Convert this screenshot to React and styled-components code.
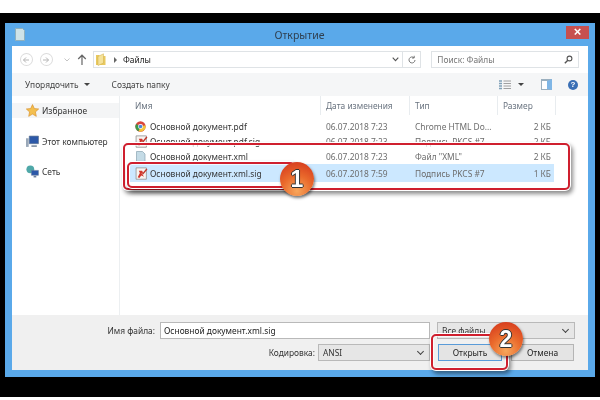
import React from "react";
import styled, { createGlobalStyle } from "styled-components";

const files = [
  { name: "Основной документ.pdf", date: "06.07.2018 7:23", type: "Chrome HTML Do...", size: "2 КБ", icon: "chrome" },
  { name: "Основной документ.pdf.sig", date: "06.07.2018 7:23", type: "Подпись PKCS #7", size: "2 КБ", icon: "sig" },
  { name: "Основной документ.xml", date: "06.07.2018 7:23", type: 'Файл "XML"', size: "2 КБ", icon: "xml" },
  { name: "Основной документ.xml.sig", date: "06.07.2018 7:59", type: "Подпись PKCS #7", size: "1 КБ", icon: "sig", selected: true },
];

function FileIcon({ kind }) {
  if (kind === "chrome") {
    return (
      <svg width="11" height="11" viewBox="0 0 12 12">
        <circle cx="6" cy="6" r="5.6" fill="#d9453a" />
        <path d="M6 6 L1.2 3.2 A5.6 5.6 0 0 0 4 11.2 Z" fill="#3a9a4a" />
        <path d="M6 6 L11.4 4.5 A5.6 5.6 0 0 1 4 11.2 Z" fill="#f2c63b" />
        <circle cx="6" cy="6" r="2.7" fill="#fff" />
        <circle cx="6" cy="6" r="2" fill="#4a86d8" />
      </svg>
    );
  }
  if (kind === "xml") {
    return (
      <svg width="11" height="12" viewBox="0 0 11 12">
        <path d="M1.5.5h6l2.5 2.5v8.5h-8.500z" fill="#c4dbe6" stroke="#8aa4b2" strokeWidth=".7" />
      </svg>
    );
  }
  return (
    <svg width="13" height="13" viewBox="0 0 12 12">
      <path d="M1 .8h9.500v10.500H1z" fill="#f6f3f0" stroke="#8c8c8c" strokeWidth=".7" />
      <path d="M2.500 9.500 L4.500 5.500 L3.500 3.500 L6.500 3.500 L7.500 5 L6 6 L8.500 9 L5.800 7.800 L4 10.200z" fill="#d2362c" />
      <path d="M6.800 6.800 L11 1.800" stroke="#c03428" strokeWidth="1.300" />
    </svg>
  );
}

function App() {
  return (
    <>
      <GlobalStyle />
      <Stage>
        <Window>
          <TitleBar>
            <svg width="10" height="13" viewBox="0 0 10 13">
              <path d="M.5.5h7l2 2v10H.5z" fill="#cfe3e8" stroke="#8fb0bd" />
            </svg>
            <Title>Открытие</Title>
            <CloseButton>×</CloseButton>
          </TitleBar>

          <Inner>
            <NavBar>
              <NavCircle>
                <svg width="8" height="8" viewBox="0 0 8 8"><path d="M7 4H1.500M4 1.500 1.500 4 4 6.500" fill="none" stroke="#b5b5b5" strokeWidth="1" /></svg>
              </NavCircle>
              <NavCircle>
                <svg width="8" height="8" viewBox="0 0 8 8"><path d="M1 4h5.500M4 1.500 6.500 4 4 6.500" fill="none" stroke="#b5b5b5" strokeWidth="1" /></svg>
              </NavCircle>
              <svg width="6" height="4" viewBox="0 0 6 4" style={{ marginLeft: 4 }}><path d="M.5.5 3 3 5.500.5" fill="none" stroke="#c4c4c4" /></svg>
              <svg width="10" height="12" viewBox="0 0 10 12" style={{ marginLeft: 7 }}><path d="M5 11V1.500M1.200 5 5 1.200 8.800 5" fill="none" stroke="#666" strokeWidth="1.200" /></svg>
              <AddressBar>
                <svg width="10" height="13" viewBox="0 0 10 13">
                  <path d="M0 2h3l1 1h5.500v9H0z" fill="#e9c95f" />
                  <path d="M2 3.500 7.500 .8V10L2 12.500z" fill="#f5e29a" stroke="#cfae4a" strokeWidth=".5" />
                </svg>
                <PathCaret />
                <PathText>Файлы</PathText>
                <Spacer />
                <svg width="7" height="5" viewBox="0 0 7 5"><path d="M.7.7 3.500 3.700 6.300.7" fill="none" stroke="#555" strokeWidth="1.100" /></svg>
                <RefreshBox>
                  <svg width="10" height="10" viewBox="0 0 10 10"><path d="M8 5a3 3 0 1 1-1-2.300M7.200.8v2.200H5" fill="none" stroke="#777" strokeWidth="1" /></svg>
                </RefreshBox>
              </AddressBar>
              <SearchBox>
                <span>Поиск: Файлы</span>
                <svg width="9" height="9" viewBox="0 0 9 9"><circle cx="5.500" cy="3.500" r="2.400" fill="none" stroke="#555" strokeWidth="1.100" /><path d="M3.800 5.200.8 8.200" stroke="#555" strokeWidth="1.400" /></svg>
              </SearchBox>
            </NavBar>

            <Toolbar>
              <ToolText>Упорядочить</ToolText>
              <Caret />
              <ToolText $gap={22}>Создать папку</ToolText>
              <Spacer />
              <svg width="12" height="10" viewBox="0 0 12 10">
                <path d="M0 1h3M0 3.500h3M0 6h3M0 8.500h3" stroke="#7fa0b8" strokeWidth="1.400" />
                <path d="M4.500 1H12M4.500 3.500H12M4.500 6H12M4.500 8.500H12" stroke="#8a8a8a" strokeWidth=".8" />
              </svg>
              <Caret $gap={7} />
              <PaneIcon />
              <HelpIcon>?</HelpIcon>
            </Toolbar>

            <Content>
              <Sidebar>
                <NavGroup $active>
                  <svg width="13" height="13" viewBox="0 0 12 12"><path d="M6 .5 7.700 4.200 11.700 4.600 8.700 7.300 9.500 11.400 6 9.300 2.500 11.400 3.300 7.300.3 4.600 4.300 4.200z" fill="#f3bf4f" stroke="#d98f2b" strokeWidth=".6" /></svg>
                  Избранное
                </NavGroup>
                <NavGroup $top={16}>
                  <svg width="13" height="13" viewBox="0 0 12 12">
                    <path d="M3 1h8.500v7H3z" fill="#2c58a8" stroke="#5a6f8c" strokeWidth=".6" />
                    <path d="M0 3h2.500v8H0z" fill="#9aa8b8" />
                    <path d="M5 9.500h5v1.500H5z" fill="#7f8ea0" />
                  </svg>
                  Этот компьютер
                </NavGroup>
                <NavGroup $top={15}>
                  <svg width="13" height="13" viewBox="0 0 12 12">
                    <circle cx="4" cy="4" r="3.600" fill="#4fa8a8" />
                    <path d="M5 5h6.500v4.500H5z" fill="#2c58a8" stroke="#6c7f9c" strokeWidth=".5" />
                    <path d="M7 10h2.500v1.500H7z" fill="#6c7f9c" />
                  </svg>
                  Сеть
                </NavGroup>
              </Sidebar>

              <FileList>
                <HeaderRow>
                  <HeaderCell>Имя</HeaderCell>
                  <HeaderCell>Дата изменения</HeaderCell>
                  <HeaderCell>Тип</HeaderCell>
                  <HeaderCell>Размер</HeaderCell>
                </HeaderRow>
                {files.map((file) => (
                  <FileRow key={file.name} $selected={file.selected}>
                    <NameCell>
                      <IconSlot><FileIcon kind={file.icon} /></IconSlot>
                      {file.name}
                    </NameCell>
                    <GreyCell>{file.date}</GreyCell>
                    <GreyCell>{file.type}</GreyCell>
                    <SizeCell>{file.size}</SizeCell>
                  </FileRow>
                ))}
              </FileList>
            </Content>

            <Footer>
              <FieldLabel>Имя файла:</FieldLabel>
              <TextInput>Основной документ.xml.sig</TextInput>
              <Combo $column="3 / span 2">Все файлы</Combo>
              <FieldLabel $row={2} $column="1">Кодировка:</FieldLabel>
              <Combo $column="2" $row={2} $indent={158}>ANSI</Combo>
              <FooterButton $focus>Открыть</FooterButton>
              <FooterButton>Отмена</FooterButton>
            </Footer>
          </Inner>

          <Highlight $x={118} $y={120} $w={447} $h={47} />
          <Highlight $x={122} $y={139} $w={168} $h={26} />
          <Highlight $x={426} $y={311} $w={77} $h={36} />
          <Badge $x={275} $y={139}>1</Badge>
          <Badge $x={484} $y={299}>2</Badge>
        </Window>
      </Stage>
    </>
  );
}

export default App;

const GlobalStyle = createGlobalStyle`
  html, body {
    margin: 0;
    background: #fff;
  }
  body {
    font-family: "Noto Sans", "Open Sans", sans-serif;
    font-size: 8.4px;
    color: #3c3c3c;
  }
`;

const Stage = styled.div`
  box-sizing: border-box;
  width: 600px;
  height: 384px;
  margin-top: 13px;
  padding: 10px 5px 20px;
  background: #000;
`;

const Window = styled.div`
  position: relative;
  display: flex;
  flex-direction: column;
  height: 100%;
  padding: 0 7px 7px;
  box-sizing: border-box;
  background: #5aa9ea;
  filter: blur(0.4px);
`;

const TitleBar = styled.div`
  position: relative;
  display: flex;
  align-items: center;
  flex: 0 0 23px;
  padding-left: 3px;
`;

const Title = styled.div`
  flex: 1;
  margin-right: 14px;
  text-align: center;
  font-size: 10.5px;
  color: #2f3f4f;
`;

const CloseButton = styled.div`
  position: absolute;
  top: 3px;
  right: -1px;
  width: 23px;
  height: 13px;
  background: #c75050;
  color: #fff;
  font: bold 13px/12px "Liberation Sans", sans-serif;
  text-align: center;
`;

const Inner = styled.div`
  flex: 1;
  display: flex;
  flex-direction: column;
  background: #fff;
  min-height: 0;
`;

const NavBar = styled.div`
  display: flex;
  align-items: center;
  flex: 0 0 27px;
  padding: 0 9px 0 8px;
  box-sizing: border-box;
`;

const NavCircle = styled.div`
  width: 13px;
  height: 13px;
  margin-right: 7px;
  box-sizing: border-box;
  border: 1px solid #dcdcdc;
  border-radius: 50%;
  display: flex;
  align-items: center;
  justify-content: center;
`;

const AddressBar = styled.div`
  display: flex;
  align-items: center;
  width: 329px;
  height: 17px;
  margin-left: 6px;
  padding-left: 2px;
  box-sizing: border-box;
  border: 1px solid #dfe3e6;
`;

const PathCaret = styled.span`
  width: 0;
  height: 0;
  margin-left: 8px;
  border-left: 3px solid #666;
  border-top: 3px solid transparent;
  border-bottom: 3px solid transparent;
`;

const PathText = styled.span`
  margin-left: 6px;
  color: #222;
`;

const Spacer = styled.div`
  flex: 1;
`;

const RefreshBox = styled.div`
  display: flex;
  align-items: center;
  justify-content: center;
  width: 17px;
  height: 100%;
  margin-left: 3px;
  border-left: 1px solid #dfe3e6;
`;

const SearchBox = styled.div`
  display: flex;
  align-items: center;
  justify-content: space-between;
  width: 148px;
  height: 17px;
  margin-left: 10px;
  padding: 0 5px;
  box-sizing: border-box;
  border: 1px solid #dfe3e6;
  color: #777;
`;

const Toolbar = styled.div`
  display: flex;
  align-items: center;
  flex: 0 0 23px;
  padding: 0 10px 0 13px;
  background: #f5f6f7;
`;

const ToolText = styled.span`
  margin-left: ${(p) => p.$gap || 0}px;
  color: #444;
`;

const Caret = styled.span`
  width: 0;
  height: 0;
  margin-left: ${(p) => p.$gap || 5}px;
  border-top: 3px solid #444;
  border-left: 3px solid transparent;
  border-right: 3px solid transparent;
`;

const PaneIcon = styled.span`
  width: 11px;
  height: 11px;
  margin-left: 17px;
  box-sizing: border-box;
  border: 1px solid #9bb0bf;
  border-right: 5px solid #7fb6e6;
  border-top: 2px solid #9bb0bf;
  background: #fff;
`;

const HelpIcon = styled.span`
  width: 10px;
  height: 10px;
  margin-left: 16px;
  border-radius: 50%;
  background: #3a6fb5;
  color: #fff;
  font: bold 8px/10px "Liberation Sans", sans-serif;
  text-align: center;
`;

const Content = styled.div`
  flex: 1;
  display: flex;
  min-height: 0;
  overflow: hidden;
`;

const Sidebar = styled.div`
  flex: 0 0 108px;
  padding-top: 7px;
  box-sizing: border-box;
  border-right: 1px solid #eceff1;
`;

const NavGroup = styled.div`
  display: flex;
  align-items: center;
  gap: 3px;
  height: 15px;
  margin-top: ${(p) => p.$top || 0}px;
  padding-left: 14px;
  background: ${(p) => (p.$active ? "#f4f5f6" : "transparent")};
  color: #333;
`;

const FileList = styled.div`
  flex: 1;
  min-width: 0;
`;

const columns = "201px 89px 88px 58px";

const HeaderRow = styled.div`
  display: grid;
  grid-template-columns: ${columns};
  height: 19px;
`;

const HeaderCell = styled.div`
  display: flex;
  align-items: center;
  padding-left: 5px;
  border-right: 1px solid #e8ecef;
  color: #6a7480;
  &:first-child {
    padding-left: 15px;
  }
`;

const FileRow = styled.div`
  display: grid;
  grid-template-columns: ${columns};
  align-items: center;
  height: ${(p) => (p.$selected ? 18 : 15)}px;
  margin: 0 34px 0 10px;
  background: ${(p) => (p.$selected ? "#cce8ff" : "transparent")};
  &:nth-child(2) {
    margin-top: 4px;
  }
  > * {
    transform: translateX(-10px);
  }
`;

const NameCell = styled.div`
  display: flex;
  align-items: center;
  padding-left: 15px;
  color: #333;
`;

const IconSlot = styled.span`
  display: flex;
  width: 15px;
`;

const GreyCell = styled.div`
  padding-left: 5px;
  color: #6d6d6d;
`;

const SizeCell = styled.div`
  padding-right: 5px;
  text-align: right;
  color: #6d6d6d;
`;

const Footer = styled.div`
  flex: 0 0 55px;
  display: grid;
  grid-template-columns: 148px 270px 71px 1fr;
  grid-template-rows: 17px 17px;
  column-gap: 0;
  row-gap: 5px;
  padding: 7px 13px 0 0;
  box-sizing: border-box;
  background: #f0f0f0;
`;

const FieldLabel = styled.div`
  grid-row: ${(p) => p.$row || 1};
  grid-column: ${(p) => p.$column || 1};
  display: flex;
  align-items: center;
  justify-content: flex-end;
  padding-right: 5px;
  color: #333;
  ${(p) => p.$row === 2 && "margin-right: -160px; position: relative; z-index: 1;"}
`;

const TextInput = styled.div`
  display: flex;
  align-items: center;
  padding-left: 3px;
  background: #fff;
  border: 1px solid #b9b9b9;
  box-sizing: border-box;
  color: #222;
`;

const Combo = styled.div`
  grid-column: ${(p) => p.$column};
  grid-row: ${(p) => p.$row || 1};
  display: flex;
  align-items: center;
  margin-left: ${(p) => p.$indent || 7}px;
  padding-left: 4px;
  box-sizing: border-box;
  border: 1px solid #b9b9b9;
  background: #e6e6e6;
  color: #333;
  position: relative;
  &::after {
    content: "";
    position: absolute;
    right: 6px;
    top: 4px;
    width: 4px;
    height: 4px;
    border-right: 1px solid #444;
    border-bottom: 1px solid #444;
    transform: rotate(45deg);
  }
`;

const FooterButton = styled.div`
  grid-row: 2;
  display: flex;
  align-items: center;
  justify-content: center;
  margin-left: ${(p) => (p.$focus ? 8 : 10)}px;
  box-sizing: border-box;
  width: ${(p) => (p.$focus ? 64 : 63)}px;
  border: 1px solid ${(p) => (p.$focus ? "#5a9bd8" : "#b5b5b5")};
  background: #e4e4e4;
  color: #222;
`;

const Highlight = styled.div`
  position: absolute;
  left: ${(p) => p.$x}px;
  top: ${(p) => p.$y}px;
  width: ${(p) => p.$w}px;
  height: ${(p) => p.$h}px;
  box-sizing: border-box;
  border: 2px solid #cf1f2e;
  border-radius: 5px;
  box-shadow: 0 0 0 1px #fff, 2px 3px 4px 1px rgba(0, 0, 0, 0.45),
    inset 0 0 0 1px rgba(255, 255, 255, 0.7);
`;

const Badge = styled.div`
  position: absolute;
  left: ${(p) => p.$x}px;
  top: ${(p) => p.$y}px;
  width: 34px;
  height: 34px;
  border-radius: 50%;
  background: radial-gradient(circle at 50% 85%, #f7a75c, #ea6a2c 45%, #d8401f 85%);
  box-shadow: 1px 2px 3px rgba(0, 0, 0, 0.5);
  color: #fff;
  font: bold 23px/34px "Liberation Sans", sans-serif;
  text-align: center;
  text-shadow: -1px 0 #333, 1px 0 #333, 0 -1px #333, 0 1px #333;
`;
